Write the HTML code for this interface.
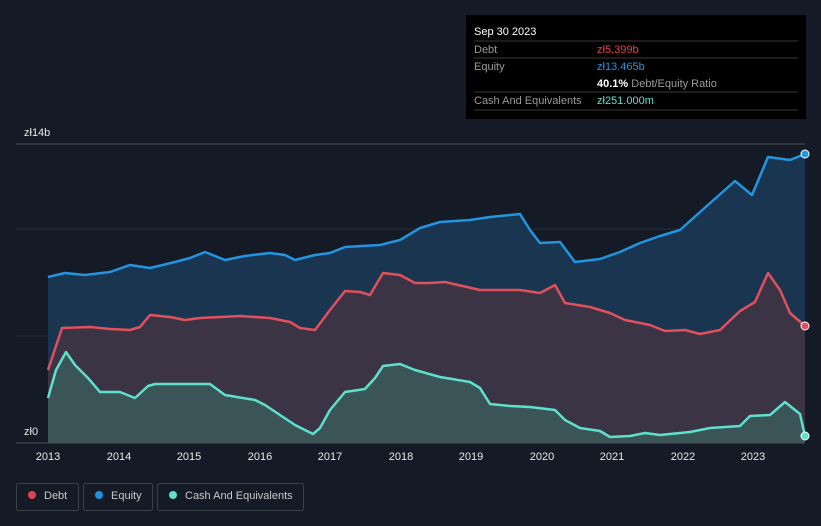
<!DOCTYPE html>
<html><head><meta charset="utf-8"><style>
html,body{margin:0;padding:0;background:#151b26;width:821px;height:526px;overflow:hidden;font-family:"Liberation Sans",sans-serif;}
</style></head><body>
<svg width="821" height="526" xmlns="http://www.w3.org/2000/svg" style="position:absolute;left:0;top:0">
<defs>
<linearGradient id="ge" x1="0" y1="0" x2="0" y2="1"><stop offset="0" stop-color="#1c4a70" stop-opacity="0.8"/><stop offset="1" stop-color="#1b3550" stop-opacity="0.6"/></linearGradient>
</defs>
<rect width="821" height="526" fill="#151b26"/>
<line x1="16" y1="144" x2="805" y2="144" stroke="#4a4f5a" stroke-width="1"/>
<line x1="16" y1="229" x2="805" y2="229" stroke="#262d38"/>
<line x1="16" y1="336" x2="805" y2="336" stroke="#262d38"/>
<text x="24" y="136" fill="#e8e8e8" font-size="11">zł14b</text>
<text x="24" y="435" fill="#e8e8e8" font-size="11">zł0</text>
<polygon fill="#193550" points="48,277 65,273 85,275 110,272 130,265 150,268 175,262 190,258 205,252 225,260 245,256 270,253 285,255 295,260 315,255 330,253 345,247 380,245 400,240 420,228 440,222 470,220 490,217 520,214 530,230 540,243 560,242 575,262 600,259 620,252 640,243 660,236 680,230 700,212 735,181 752,195 768,157 790,160 805,154 805,443 48,443"/>
<polygon fill="#3a3444" points="48,370 62,328 90,327 110,329 130,330 140,327 150,315 170,317 185,320 200,318 240,316 270,318 290,322 300,328 315,330 330,310 345,291 360,292 370,295 383,273 400,275 415,283 430,283 445,282 480,290 520,290 540,293 555,285 565,303 590,307 610,313 625,320 650,325 665,331 685,330 700,334 720,330 740,311 755,302 768,273 780,290 790,313 805,326 805,443 48,443"/>
<polygon fill="#3b5458" points="48,398 56,370 66,352 75,365 88,378 100,392 120,392 135,398 148,386 155,384 210,384 225,395 255,400 265,405 280,415 295,425 313,434 320,428 330,410 345,392 365,389 375,378 383,366 400,364 415,370 440,377 470,382 480,388 490,404 510,406 530,407 555,410 565,420 580,428 600,431 610,437 630,436 645,433 660,435 690,432 710,428 740,426 750,416 770,415 785,402 800,414 805,436 805,443 48,443"/>
<polyline fill="none" stroke="#2394df" stroke-width="2.5" stroke-linejoin="round" points="48,277 65,273 85,275 110,272 130,265 150,268 175,262 190,258 205,252 225,260 245,256 270,253 285,255 295,260 315,255 330,253 345,247 380,245 400,240 420,228 440,222 470,220 490,217 520,214 530,230 540,243 560,242 575,262 600,259 620,252 640,243 660,236 680,230 700,212 735,181 752,195 768,157 790,160 805,154"/>
<polyline fill="none" stroke="#e0505d" stroke-width="2.5" stroke-linejoin="round" points="48,370 62,328 90,327 110,329 130,330 140,327 150,315 170,317 185,320 200,318 240,316 270,318 290,322 300,328 315,330 330,310 345,291 360,292 370,295 383,273 400,275 415,283 430,283 445,282 480,290 520,290 540,293 555,285 565,303 590,307 610,313 625,320 650,325 665,331 685,330 700,334 720,330 740,311 755,302 768,273 780,290 790,313 805,326"/>
<polyline fill="none" stroke="#5fe0cc" stroke-width="2.5" stroke-linejoin="round" points="48,398 56,370 66,352 75,365 88,378 100,392 120,392 135,398 148,386 155,384 210,384 225,395 255,400 265,405 280,415 295,425 313,434 320,428 330,410 345,392 365,389 375,378 383,366 400,364 415,370 440,377 470,382 480,388 490,404 510,406 530,407 555,410 565,420 580,428 600,431 610,437 630,436 645,433 660,435 690,432 710,428 740,426 750,416 770,415 785,402 800,414 805,436"/>
<circle cx="805" cy="154" r="4" fill="#2394df" stroke="#fff" stroke-width="1"/>
<circle cx="805" cy="326" r="4" fill="#e0505d" stroke="#fff" stroke-width="1"/>
<circle cx="805" cy="436" r="4" fill="#5fe0cc" stroke="#fff" stroke-width="1"/>
<line x1="16" y1="443" x2="805" y2="443" stroke="#4a4f5a"/>
<g fill="#e8e8e8" font-size="11" text-anchor="middle">
<text x="48" y="460">2013</text><text x="119" y="460">2014</text><text x="189" y="460">2015</text><text x="260" y="460">2016</text><text x="330" y="460">2017</text><text x="401" y="460">2018</text><text x="471" y="460">2019</text><text x="542" y="460">2020</text><text x="612" y="460">2021</text><text x="683" y="460">2022</text><text x="753" y="460">2023</text>
</g>
<g stroke="#3c424d" fill="none">
<rect x="16.5" y="483.5" width="62" height="27" rx="2"/>
<rect x="83.5" y="483.5" width="69" height="27" rx="2"/>
<rect x="157.5" y="483.5" width="146" height="27" rx="2"/>
</g>
<circle cx="32" cy="495" r="4" fill="#e0434d"/><circle cx="99" cy="495" r="4" fill="#2390e0"/><circle cx="173" cy="495" r="4" fill="#5fe0cc"/>
<g fill="#c8c8c8" font-size="11"><text x="44" y="499">Debt</text><text x="111" y="499">Equity</text><text x="185" y="499">Cash And Equivalents</text></g>
<rect x="466" y="15" width="340" height="104" fill="#000"/>
<g stroke="#3a3a3a"><line x1="474" y1="41" x2="798" y2="41"/><line x1="474" y1="58" x2="798" y2="58"/><line x1="474" y1="92" x2="798" y2="92"/><line x1="474" y1="110" x2="798" y2="110"/></g>
<g font-size="11">
<text x="474" y="35" fill="#fff">Sep 30 2023</text>
<text x="474" y="53" fill="#9a9a9a">Debt</text><text x="597" y="53" fill="#e5404b">zł5.399b</text>
<text x="474" y="70" fill="#9a9a9a">Equity</text><text x="597" y="70" fill="#2394df">zł13.465b</text>
<text x="597" y="87" fill="#fff" font-weight="bold">40.1%<tspan fill="#9a9a9a" font-weight="normal"> Debt/Equity Ratio</tspan></text>
<text x="474" y="104" fill="#9a9a9a">Cash And Equivalents</text><text x="597" y="104" fill="#5fe0cc">zł251.000m</text>
</g>
</svg>
</body></html>
